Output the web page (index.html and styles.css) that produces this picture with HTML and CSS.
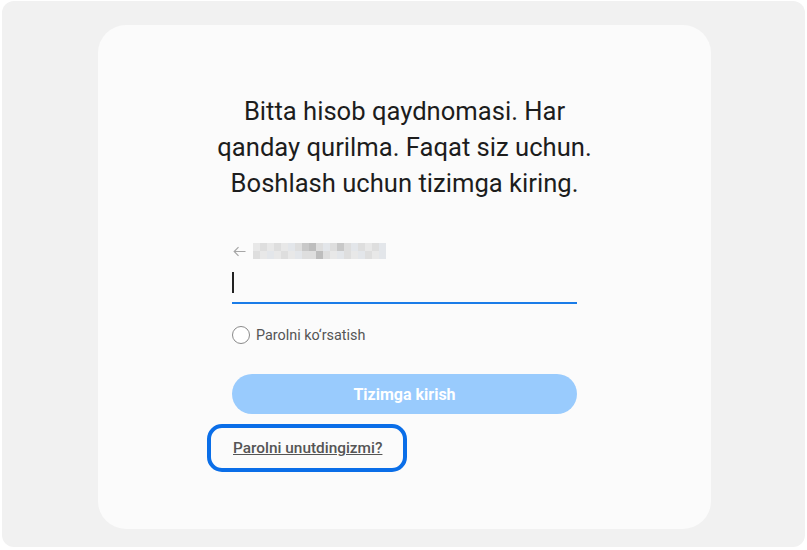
FILE: index.html
```html
<!DOCTYPE html>
<html lang="uz">
<head>
<meta charset="utf-8">
<title>Tizimga kirish</title>
<link rel="stylesheet" href="styles.css">
</head>
<body>
<div class="frame">
  <div class="card">
    <h1 class="title">Bitta hisob qaydnomasi. Har<br>qanday qurilma. Faqat siz uchun.<br>Boshlash uchun tizimga kiring.</h1>
    <div class="form">
      <div class="back-row">
        <svg class="back" width="13" height="11" viewBox="0 0 13 11"><path d="M12.5 5.5H1.2M5.5 1.2L1.2 5.5l4.3 4.3" fill="none" stroke="#a6a6a6" stroke-width="1.2"/></svg>
        <div class="pix">
          <span class="a"></span><span class="b"></span><span class="a"></span><span class="b"></span><span class="a"></span><span class="c"></span><span class="b"></span><span class="d"></span><span class="e"></span><span class="b"></span><span class="c"></span><span class="b"></span><span class="d"></span><span class="b"></span><span class="c"></span><span class="b"></span><span class="a"></span><span class="b"></span><span class="c"></span>
          <span class="b"></span><span class="a"></span><span class="c"></span><span class="a"></span><span class="b"></span><span class="a"></span><span class="c"></span><span class="b"></span><span class="b"></span><span class="e"></span><span class="b"></span><span class="a"></span><span class="c"></span><span class="b"></span><span class="a"></span><span class="c"></span><span class="b"></span><span class="a"></span><span class="c"></span>
        </div>
      </div>
      <div class="field"><span class="caret"></span></div>
      <label class="check"><span class="radio"></span>Parolni ko‘rsatish</label>
      <button class="btn">Tizimga kirish</button>
      <div class="link-wrap"><a class="link" href="#">Parolni unutdingizmi?</a></div>
    </div>
  </div>
</div>
</body>
</html>
```
FILE: styles.css
```css
html, body { margin: 0; padding: 0; background: #ffffff; }
body { font-family: Roboto, "Noto Sans", sans-serif; }
.frame {
  margin: 1px 2px 0 2px;
  height: 546px;
  background: #f1f1f1;
  border-radius: 12px;
  padding-top: 24px;
  box-sizing: border-box;
}
.card {
  margin-left: 96px;
  width: 613px;
  height: 504px;
  background: #fbfbfb;
  border-radius: 28px;
  padding-top: 68px;
  box-sizing: border-box;
  display: flex;
  flex-direction: column;
  align-items: center;
}
.title {
  margin: 0;
  font-weight: 400;
  font-size: 25.6px;
  line-height: 36px;
  color: #1d1d1d;
  text-align: center;
}
.form {
  width: 345px;
  margin-top: 42px;
  display: flex;
  flex-direction: column;
}
.back-row { display: flex; align-items: center; gap: 7px; height: 16px; margin-left: 1px; }
.back { display: block; }
.pix { display: grid; grid-template-columns: repeat(19, 7px); grid-auto-rows: 8px; }
.pix span.a { background: #e8e8e8; }
.pix span.b { background: #dedede; }
.pix span.c { background: #e3e6ea; }
.pix span.d { background: #c8c8c8; }
.pix span.e { background: #bdbdbd; }
.field {
  margin-top: 13px;
  height: 30px;
  border-bottom: 2px solid #1a7ce8;
  position: relative;
}
.caret { position: absolute; left: 0; top: 0; width: 2px; height: 21px; background: #222; }
.check {
  margin-top: 21px;
  display: flex;
  align-items: center;
  gap: 6px;
  font-size: 14.4px;
  color: #555;
  height: 20px;
}
.radio {
  width: 18px; height: 18px;
  border: 1.3px solid #8a8a8a;
  border-radius: 50%;
  box-sizing: border-box;
  background: #fff;
}
.btn {
  margin-top: 29px;
  height: 40px;
  border: none;
  border-radius: 20px;
  background: #99cbfd;
  color: #fff;
  font-family: inherit;
  font-size: 16px;
  font-weight: 700;
}
.link-wrap { margin-top: 10px; margin-left: -25px; display: flex; }
.link {
  display: block;
  padding: 11px 21px 11px 22px;
  border: 4px solid #0a6ee8;
  border-radius: 15px;
  font-size: 15.4px;
  font-weight: 500;
  color: #555;
  text-decoration: underline;
  line-height: 18px;
}
```
